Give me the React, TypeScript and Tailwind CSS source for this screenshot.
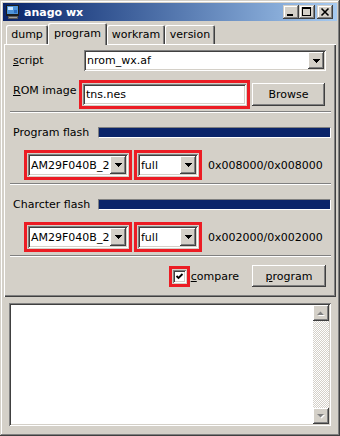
import type { ReactNode } from "react";

const raised =
  "shadow-[inset_-1px_-1px_#404040,inset_1px_1px_#ffffff,inset_-2px_-2px_#808080,inset_2px_2px_#d4d0c8]";
const sunken =
  "shadow-[inset_1px_1px_#808080,inset_-1px_-1px_#ffffff,inset_2px_2px_#404040,inset_-2px_-2px_#d4d0c8]";

function AppIcon() {
  return (
    <svg width="16" height="16" viewBox="0 0 16 16" className="shrink-0">
      <rect x="1" y="1" width="13" height="11" fill="#1c1c1c" />
      <rect x="2" y="2" width="11" height="8" fill="#4f94d8" />
      <rect x="3" y="3" width="5" height="3" fill="#c8e4ff" />
      <rect x="9" y="6" width="3" height="3" fill="#2a6cc0" />
      <rect x="3" y="12" width="10" height="3" fill="#5a5a5a" />
      <rect x="4" y="13" width="8" height="1" fill="#a0a0a0" />
    </svg>
  );
}

function CaptionButton({ kind, className = "" }: { kind: "min" | "max" | "close"; className?: string }) {
  return (
    <div
      className={`w-[16px] h-[14px] bg-[#d4d0c8] shadow-[inset_-1px_-1px_#404040,inset_1px_1px_#d4d0c8,inset_-2px_-2px_#808080,inset_2px_2px_#ffffff] ${className}`}
    >
      <svg width="16" height="14" viewBox="0 0 16 14">
        {kind === "min" && <rect x="4" y="9" width="6" height="2" fill="#000" />}
        {kind === "max" && (
          <path d="M3 2h9v9H3z M4 4h7v6H4z" fillRule="evenodd" fill="#000" />
        )}
        {kind === "close" && (
          <path d="M4.5 3.5L11.5 10.5M11.5 3.5L4.5 10.5" stroke="#000" strokeWidth="1.6" />
        )}
      </svg>
    </div>
  );
}

function Tab({ label, active = false, className = "" }: { label: string; active?: boolean; className?: string }) {
  return (
    <div
      className={`flex items-center justify-center bg-[#d4d0c8] rounded-t-[2px] shadow-[inset_1px_1px_#ffffff,inset_-1px_0_#404040,inset_-2px_0_#808080] ${
        active ? "h-[22px] -mb-[1px] relative z-10 pb-[2px]" : "h-[19px]"
      } ${className}`}
    >
      {label}
    </div>
  );
}

function Arrow() {
  return (
    <svg width="7" height="4" viewBox="0 0 7 4">
      <rect x="0" y="0" width="7" height="1" fill="#000" />
      <rect x="1" y="1" width="5" height="1" fill="#000" />
      <rect x="2" y="2" width="3" height="1" fill="#000" />
      <rect x="3" y="3" width="1" height="1" fill="#000" />
    </svg>
  );
}

function Combo({ value, className = "" }: { value: string; className?: string }) {
  return (
    <div className={`flex bg-white ${sunken} ${className}`}>
      <span className="flex-1 flex items-center pl-[3px] overflow-hidden whitespace-nowrap">{value}</span>
      <div className={`w-[16px] my-[2px] mr-[2px] shrink-0 flex items-center justify-center bg-[#d4d0c8] ${raised}`}>
        <Arrow />
      </div>
    </div>
  );
}

function Highlight({ children, className = "" }: { children: ReactNode; className?: string }) {
  return <div className={`border-[3px] border-[#ec1c24] p-[1px] ${className}`}>{children}</div>;
}

function Button({ children, className = "" }: { children: ReactNode; className?: string }) {
  return (
    <div className={`flex items-center justify-center bg-[#d4d0c8] ${raised} ${className}`}>{children}</div>
  );
}

function Separator({ className = "" }: { className?: string }) {
  return <div className={`ml-[6px] mr-[5px] h-[2px] border-t border-t-[#808080] border-b border-b-white ${className}`} />;
}

function FlashBlock({ label, total }: { label: string; total: string }) {
  return (
    <>
      <div className="mt-[14px] pl-[9px] pr-[5px] flex items-center h-[11px]">
        <span className="w-[85px] whitespace-nowrap">{label}</span>
        <div className="flex-1 h-[11px] bg-[#0a246a] border border-t-[#808080] border-l-[#808080] border-b-white border-r-white" />
      </div>
      <div className="mt-[12px] pl-[20px] flex items-center">
        <Highlight className="w-[108px]">
          <Combo value="AM29F040B_2" className="h-[22px]" />
        </Highlight>
        <Highlight className="ml-[2px] w-[68px]">
          <Combo value="full" className="h-[22px]" />
        </Highlight>
        <span className="ml-[6px] whitespace-nowrap">{total}</span>
      </div>
      <Separator className="mt-[3px]" />
    </>
  );
}

function ScrollButton({ dir }: { dir: "up" | "down" }) {
  return (
    <div className={`h-[16px] shrink-0 flex items-center justify-center bg-[#d4d0c8] ${raised}`}>
      <svg width="8" height="5" viewBox="0 0 8 5">
        {dir === "up" ? (
          <>
            <path d="M1 5h7L4.5 1.5z" fill="#ffffff" />
            <path d="M0 4h7L3.5 0.5z" fill="#808080" />
          </>
        ) : (
          <>
            <path d="M1 1h7L4.5 4.5z" fill="#ffffff" />
            <path d="M0 0h7L3.5 3.5z" fill="#808080" />
          </>
        )}
      </svg>
    </div>
  );
}

export default function App() {
  return (
    <div className="w-[340px] h-[436px] p-[3px] flex flex-col bg-[#d4d0c8] text-[11px] leading-none text-black font-['DejaVu_Sans',sans-serif] shadow-[inset_-1px_-1px_#404040,inset_1px_1px_#d4d0c8,inset_-2px_-2px_#808080,inset_2px_2px_#ffffff]">
      {/* title bar */}
      <div className="h-[18px] shrink-0 flex items-center pl-[2px] pr-[4px] bg-linear-to-r from-[#0a246a] to-[#a6caf0]">
        <AppIcon />
        <span className="ml-[3px] font-bold text-white">anago wx</span>
        <div className="ml-auto flex items-center">
          <CaptionButton kind="min" />
          <CaptionButton kind="max" />
          <CaptionButton kind="close" className="ml-[2px]" />
        </div>
      </div>

      {/* tabs */}
      <div className="mt-[2px] h-[21px] shrink-0 flex items-end pl-[3px]">
        <Tab label="dump" className="w-[42px]" />
        <Tab label="program" active className="w-[59px]" />
        <Tab label="workram" className="w-[58px]" />
        <Tab label="version" className="w-[50px]" />
      </div>

      {/* program page */}
      <div className="mx-[1px] h-[253px] shrink-0 flex flex-col shadow-[inset_1px_1px_#ffffff,inset_-1px_-1px_#404040,inset_-2px_-2px_#808080]">
        <div className="pt-[6px] pl-[9px] flex items-center">
          <span className="w-[71px]">
            <span className="underline">s</span>cript
          </span>
          <Combo value="nrom_wx.af" className="w-[242px] h-[21px]" />
        </div>
        <div className="mt-[9px] pl-[9px] flex items-center">
          <span className="w-[66px] self-start mt-[5px] whitespace-nowrap">
            <span className="underline">R</span>OM image
          </span>
          <Highlight className="w-[171px]">
            <div className={`h-[21px] bg-white flex items-center pl-[3px] ${sunken}`}>tns.nes</div>
          </Highlight>
          <Button className="ml-[2px] w-[73px] h-[23px]">Browse</Button>
        </div>
        <Separator className="mt-[2px]" />

        <FlashBlock label="Program flash" total="0x008000/0x008000" />
        <FlashBlock label="Charcter flash" total="0x002000/0x002000" />

        <div className="mt-[8px] pr-[10px] flex items-center justify-end">
          <Highlight>
            <div className={`w-[13px] h-[13px] bg-white ${sunken}`}>
              <svg width="13" height="13" viewBox="0 0 13 13">
                <path d="M3.5 6L5.5 8L9.5 4" stroke="#000" strokeWidth="1.8" fill="none" />
              </svg>
            </div>
          </Highlight>
          <span className="ml-[1px]">
            <span className="underline">c</span>ompare
          </span>
          <Button className="ml-[13px] w-[74px] h-[22px]">
            <span>
              <span className="underline">p</span>rogram
            </span>
          </Button>
        </div>
      </div>

      {/* log */}
      <div className={`mt-[6px] mx-[6px] h-[123px] shrink-0 bg-white flex p-[2px] ${sunken}`}>
        <div className="flex-1" />
        <div className="w-[16px] flex flex-col">
          <ScrollButton dir="up" />
          <div className="flex-1 bg-[repeating-conic-gradient(#d4d0c8_0_25%,#ffffff_0_50%)] bg-size-[2px_2px]" />
          <ScrollButton dir="down" />
        </div>
      </div>
    </div>
  );
}
